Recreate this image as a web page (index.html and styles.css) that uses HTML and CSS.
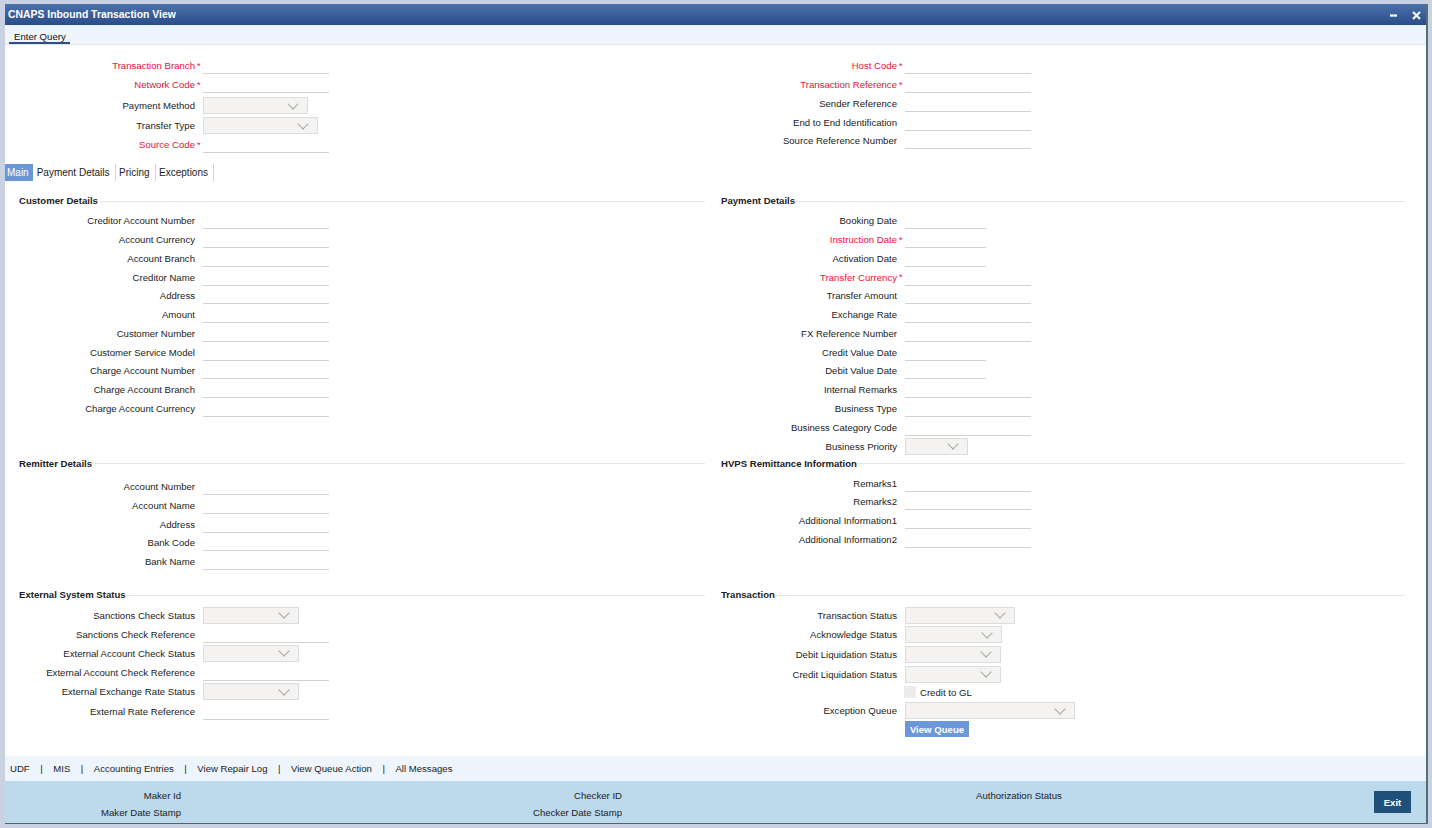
FILE: index.html
```html
<!DOCTYPE html>
<html>
<head>
<meta name="viewport" content="width=device-width, initial-scale=1">
<link rel="stylesheet" href="styles.css">
</head>
<body>

<div class="win">

<div class="ttl">
<span class="ttxt">CNAPS Inbound Transaction View</span>
<svg class="mn" width="7" height="3" viewBox="0 0 7 3"><rect x="0" y="0.4" width="7" height="2.2" fill="#fff"/></svg>
<svg class="cl" width="9" height="9" viewBox="0 0 9 9"><path d="M1 1L8 8M8 1L1 8" stroke="#fff" stroke-width="2" fill="none"/></svg>
</div>

<div class="tbar"><span>Enter Query</span></div>

<div class="content">

<div class="grid2 hdr">
<div>
<div class="row"><label class="rq">Transaction Branch</label><i>*</i><span class="inp"></span></div>
<div class="row"><label class="rq">Network Code</label><i>*</i><span class="inp"></span></div>
<div class="row s m2"><label>Payment Method</label><i></i><span class="sel w105"></span></div>
<div class="row s"><label>Transfer Type</label><i></i><span class="sel w115"></span></div>
<div class="row"><label class="rq">Source Code</label><i>*</i><span class="inp"></span></div>
</div>
<div>
<div class="row"><label class="rq">Host Code</label><i>*</i><span class="inp"></span></div>
<div class="row"><label class="rq">Transaction Reference</label><i>*</i><span class="inp"></span></div>
<div class="row"><label>Sender Reference</label><i></i><span class="inp"></span></div>
<div class="row"><label>End to End Identification</label><i></i><span class="inp"></span></div>
<div class="row"><label>Source Reference Number</label><i></i><span class="inp"></span></div>
</div>
</div>

<div class="tabs">
<span class="tab on">Main</span>
<span class="tab">Payment Details</span>
<span class="tab">Pricing</span>
<span class="tab">Exceptions</span>
</div>

<div class="grid2 g1">
<div class="sec">
<h4>Customer Details</h4>
<div class="row"><label>Creditor Account Number</label><i></i><span class="inp"></span></div>
<div class="row"><label>Account Currency</label><i></i><span class="inp"></span></div>
<div class="row"><label>Account Branch</label><i></i><span class="inp"></span></div>
<div class="row"><label>Creditor Name</label><i></i><span class="inp"></span></div>
<div class="row"><label>Address</label><i></i><span class="inp"></span></div>
<div class="row"><label>Amount</label><i></i><span class="inp"></span></div>
<div class="row"><label>Customer Number</label><i></i><span class="inp"></span></div>
<div class="row"><label>Customer Service Model</label><i></i><span class="inp"></span></div>
<div class="row"><label>Charge Account Number</label><i></i><span class="inp"></span></div>
<div class="row"><label>Charge Account Branch</label><i></i><span class="inp"></span></div>
<div class="row"><label>Charge Account Currency</label><i></i><span class="inp"></span></div>
</div>
<div class="sec">
<h4>Payment Details</h4>
<div class="row"><label>Booking Date</label><i></i><span class="inp sh"></span></div>
<div class="row"><label class="rq">Instruction Date</label><i>*</i><span class="inp sh"></span></div>
<div class="row"><label>Activation Date</label><i></i><span class="inp sh"></span></div>
<div class="row"><label class="rq">Transfer Currency</label><i>*</i><span class="inp"></span></div>
<div class="row"><label>Transfer Amount</label><i></i><span class="inp"></span></div>
<div class="row"><label>Exchange Rate</label><i></i><span class="inp"></span></div>
<div class="row"><label>FX Reference Number</label><i></i><span class="inp"></span></div>
<div class="row"><label>Credit Value Date</label><i></i><span class="inp sh"></span></div>
<div class="row"><label>Debit Value Date</label><i></i><span class="inp sh"></span></div>
<div class="row"><label>Internal Remarks</label><i></i><span class="inp"></span></div>
<div class="row"><label>Business Type</label><i></i><span class="inp"></span></div>
<div class="row"><label>Business Category Code</label><i></i><span class="inp"></span></div>
<div class="row s"><label>Business Priority</label><i></i><span class="sel w63"></span></div>
</div>
</div>

<div class="grid2 g2">
<div class="sec">
<h4>Remitter Details</h4>
<div class="row m5"><label>Account Number</label><i></i><span class="inp"></span></div>
<div class="row"><label>Account Name</label><i></i><span class="inp"></span></div>
<div class="row"><label>Address</label><i></i><span class="inp"></span></div>
<div class="row"><label>Bank Code</label><i></i><span class="inp"></span></div>
<div class="row"><label>Bank Name</label><i></i><span class="inp"></span></div>
</div>
<div class="sec">
<h4>HVPS Remittance Information</h4>
<div class="row"><label>Remarks1</label><i></i><span class="inp"></span></div>
<div class="row"><label>Remarks2</label><i></i><span class="inp"></span></div>
<div class="row"><label>Additional Information1</label><i></i><span class="inp"></span></div>
<div class="row"><label>Additional Information2</label><i></i><span class="inp"></span></div>
</div>
</div>

<div class="grid2 g3">
<div class="sec">
<h4>External System Status</h4>
<div class="row s"><label>Sanctions Check Status</label><i></i><span class="sel w96"></span></div>
<div class="row"><label>Sanctions Check Reference</label><i></i><span class="inp"></span></div>
<div class="row s"><label>External Account Check Status</label><i></i><span class="sel w96"></span></div>
<div class="row"><label>External Account Check Reference</label><i></i><span class="inp"></span></div>
<div class="row s"><label>External Exchange Rate Status</label><i></i><span class="sel w96"></span></div>
<div class="row"><label>External Rate Reference</label><i></i><span class="inp"></span></div>
</div>
<div class="sec">
<h4>Transaction</h4>
<div class="row s"><label>Transaction Status</label><i></i><span class="sel w110"></span></div>
<div class="row s"><label>Acknowledge Status</label><i></i><span class="sel w97"></span></div>
<div class="row s"><label>Debit Liquidation Status</label><i></i><span class="sel w96"></span></div>
<div class="row s"><label>Credit Liquidation Status</label><i></i><span class="sel w96"></span></div>
<div class="row cb"><label></label><i></i><span class="cbx"></span>Credit to GL</div>
<div class="row s"><label>Exception Queue</label><i></i><span class="sel w170"></span></div>
<div class="row bt"><label></label><i></i><button class="vq">View Queue</button></div>
</div>
</div>

</div>

<div class="links">
<span>UDF</span><span class="sep">|</span><span>MIS</span><span class="sep">|</span><span>Accounting Entries</span><span class="sep">|</span><span>View Repair Log</span><span class="sep">|</span><span>View Queue Action</span><span class="sep">|</span><span>All Messages</span>
</div>

<div class="foot">
<div class="fl">Maker Id<br>Maker Date Stamp</div>
<div class="fc">Checker ID<br>Checker Date Stamp</div>
<div class="fa">Authorization Status</div>
<button class="exit">Exit</button>
</div>

</div>

</body>
</html>
```

FILE: styles.css
```css
body{margin:0;background:#c9d2e1;font-family:"Liberation Sans",Arial,sans-serif;font-size:9.6px;color:#222;}
.win{margin:4px 0 0 5px;width:1421px;height:819px;display:flex;flex-direction:column;background:#fff;border-right:2px solid #586d7b;border-bottom:1px solid #4f6573;}

.ttl{flex:none;height:21px;display:flex;align-items:center;padding:0 5px 0 3px;background:linear-gradient(#4b71aa,#2a4d8b);color:#fff;font-size:10.4px;font-weight:bold;}
.ttxt{flex:1;}
.ttl svg{margin-top:1px;}
.mn{margin-right:15px;}

.tbar{flex:none;height:19px;display:flex;align-items:flex-end;padding-left:4px;background:#eef5fd;border-bottom:1px solid #dfe6ef;}
.tbar span{line-height:11px;padding:0 4px 0 5px;border-bottom:2.5px solid #2c4f89;color:#111;}

.content{flex:1;}
.grid2{display:grid;grid-template-columns:686px 684px;column-gap:16px;padding-left:14px;align-items:start;}
.hdr{padding-top:11.6px;}
.g1{margin-top:11px;}
.g2{margin-top:-2px;}
.g3{margin-top:14.6px;}

.row{display:flex;align-items:center;height:18.75px;}
.row.s{height:19.7px;}
.row.m2{margin-top:2px;}
.row.m5{margin-top:5px;}
.row label{width:176px;flex:none;text-align:right;}
.row label.rq{color:#ea1038;}
.row i{width:8px;flex:none;align-self:flex-start;box-sizing:border-box;padding-left:2px;margin-top:3.5px;line-height:12px;font-size:9px;font-style:normal;color:#ea1038;}

.inp{width:126px;height:17px;box-sizing:border-box;border-bottom:1px solid #d2d2d2;}
.inp.sh{width:81px;}
.sel{height:17px;box-sizing:border-box;border:1px solid #dcdcdc;background:#f4f3f1;display:flex;align-items:center;justify-content:flex-end;padding-right:10px;}
.sel::after{content:"";width:7px;height:7px;border:solid #a8a8a8;border-width:0 1.5px 1.5px 0;transform:rotate(45deg);margin-top:-4px;}
.w63{width:63px;}
.w96{width:96px;}
.w97{width:97px;}
.w105{width:105px;}
.w110{width:110px;}
.w115{width:115px;}
.w170{width:170px;}

.row.cb{height:17px;}
.cbx{width:12px;height:12px;background:#ececec;margin:0 4px 0 -1px;}
.row.bt{height:17px;}
.vq{height:16px;width:64px;padding:0;border:none;background:#6b98d8;color:#fff;font:bold 9.6px "Liberation Sans",Arial,sans-serif;}

.tabs{display:flex;height:17px;margin-top:9.75px;font-size:10px;}
.tab{line-height:17px;padding:0 5px 0 3.5px;border-right:1px solid #d4d4d4;}
.tab.on{background:#6b96d6;color:#fff;border-right:none;padding:0 4.5px 0 2px;}

.sec h4{margin:0 0 1.6px 0;height:18px;display:flex;align-items:center;font-size:9.6px;font-weight:bold;color:#222;}
.sec h4::after{content:"";flex:1;border-top:1px solid #e6e6e6;margin-top:1px;}

.links{flex:none;height:25px;display:flex;align-items:center;padding-left:5px;background:#eef5fd;}
.links .sep{margin:0 10.5px;}

.foot{flex:none;height:42px;display:flex;background:#bdd9ec;line-height:17px;}
.fl,.fc,.fa{padding-top:5.5px;}
.fl{width:176px;text-align:right;}
.fc{width:441px;text-align:right;}
.fa{margin-left:354px;}
.exit{margin:0 15px 0 auto;align-self:center;width:37px;height:22px;padding:0;border:none;background:#1f5079;color:#fff;font:bold 9.6px "Liberation Sans",Arial,sans-serif;}
```
